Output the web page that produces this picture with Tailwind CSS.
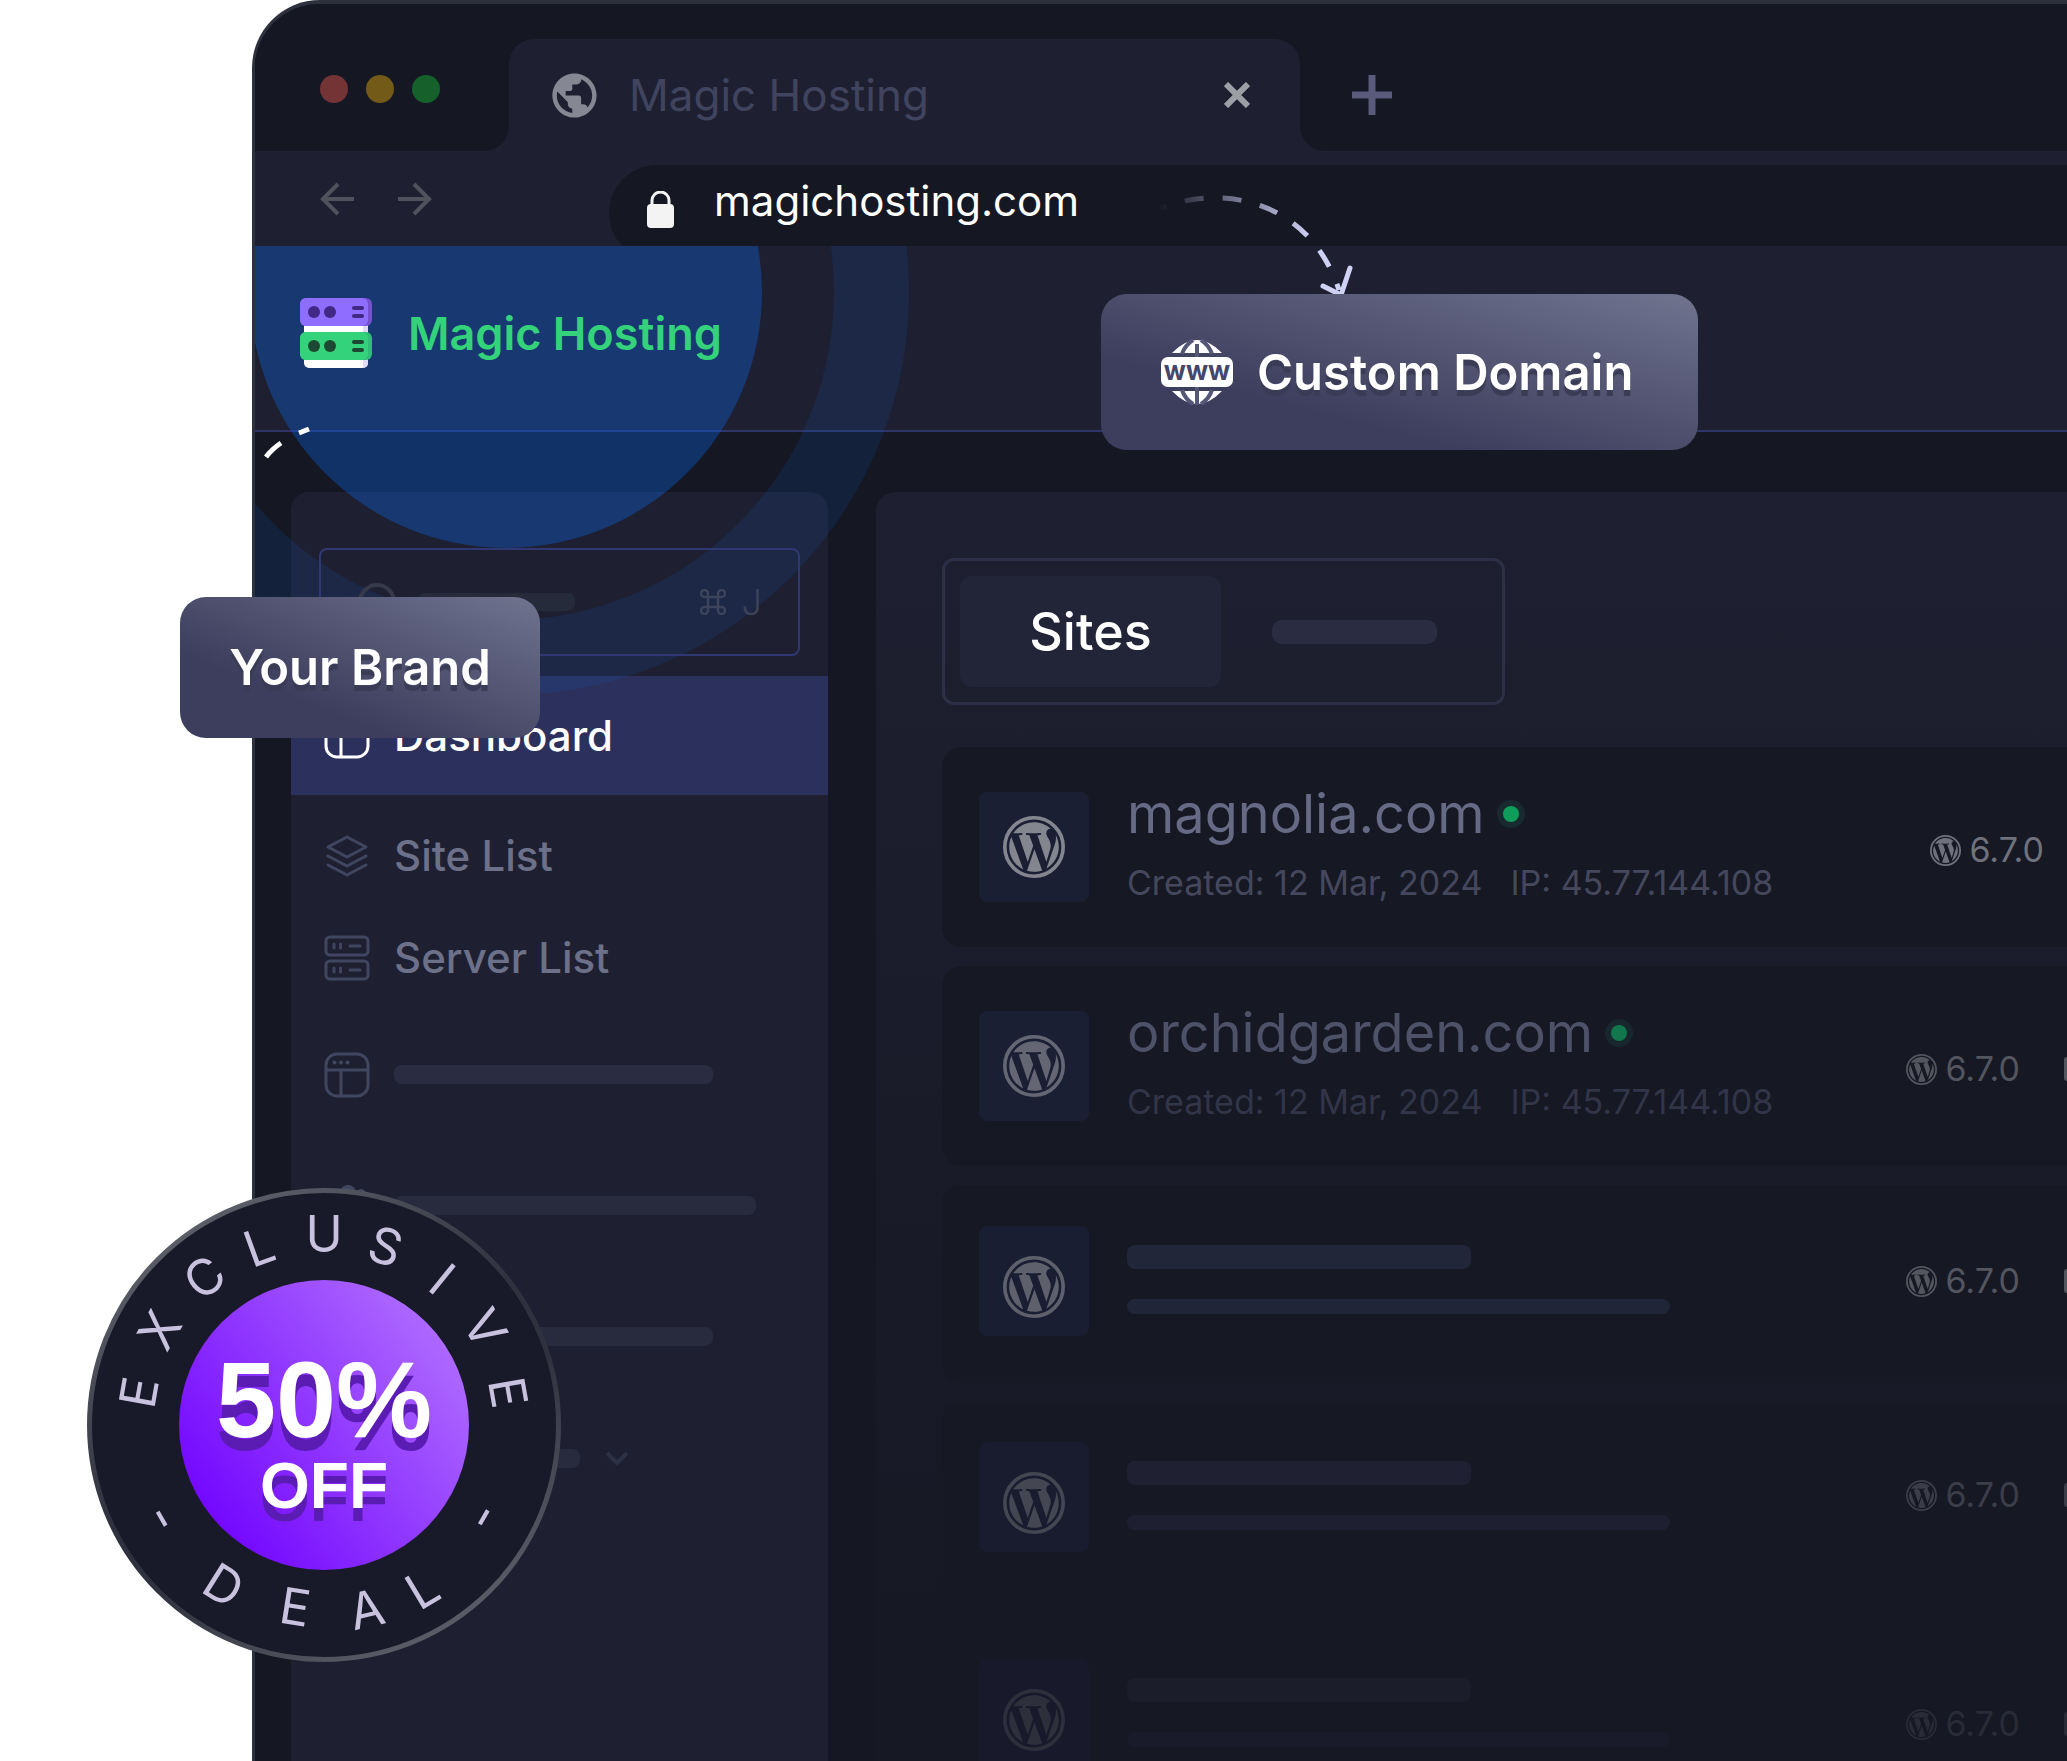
<!DOCTYPE html>
<html lang="en">
<head>
  <meta charset="UTF-8" />
  <meta name="viewport" content="width=device-width, initial-scale=1.0"/>
  <title>Magic Hosting</title>
  <script src="https://cdn.jsdelivr.net/npm/@tailwindcss/browser@4"></script>
</head>
<body class="bg-white font-['Inter',sans-serif]">

  <!-- Shared icons -->
  <svg class="hidden" aria-hidden="true">
    <symbol id="wp" viewBox="0 0 24 24">
      <circle cx="12" cy="12" r="11.3" fill="none" stroke="currentColor" stroke-width="1.4"/>
      <g fill="currentColor" transform="translate(12 12) scale(.89) translate(-12 -12)">
        <path d="M21.469 6.825c.84 1.537 1.318 3.3 1.318 5.175 0 3.979-2.156 7.456-5.363 9.325l3.295-9.527c.615-1.54.82-2.771.82-3.864 0-.405-.026-.78-.07-1.11z"/>
        <path d="M13.488 6.93c.647-.03 1.232-.105 1.232-.105.582-.075.514-.93-.067-.899 0 0-1.755.135-2.88.135-1.064 0-2.85-.15-2.85-.15-.585-.03-.661.855-.075.885 0 0 .54.061 1.125.09l1.68 4.605-2.37 7.08L5.354 6.9c.649-.03 1.234-.1 1.234-.1.585-.075.516-.93-.065-.896 0 0-1.746.138-2.874.138-.2 0-.438-.008-.69-.015C4.911 3.15 8.235 1.215 12 1.215c2.809 0 5.365 1.072 7.286 2.833-.046-.003-.091-.009-.141-.009-1.06 0-1.812.923-1.812 1.914 0 .89.513 1.643 1.06 2.531.411.72.89 1.643.89 2.977 0 .915-.354 1.994-.821 3.479l-1.075 3.585-3.9-11.61z"/>
        <path d="M12 22.784c-1.059 0-2.081-.153-3.048-.437l3.237-9.406 3.315 9.087c.024.053.05.101.078.149-1.12.393-2.325.609-3.582.609z"/>
        <path d="M1.211 12c0-1.564.336-3.05.935-4.39L7.29 21.709C3.694 19.96 1.212 16.271 1.211 12z"/>
      </g>
    </symbol>
    <symbol id="layout" viewBox="0 0 46 46">
      <g fill="none" stroke="currentColor" stroke-width="3">
        <rect x="2" y="2" width="42" height="42" rx="11"/>
        <path d="M2 18h42M17 18v26"/>
      </g>
      <g fill="currentColor"><circle cx="10.500" cy="10.500" r="2"/><circle cx="17" cy="10.500" r="2"/><circle cx="23.500" cy="10.500" r="2"/></g>
    </symbol>
  </svg>

  <div class="relative h-screen overflow-hidden pl-[252px]">

    <!-- Browser window -->
    <div class="isolate flex h-full flex-col overflow-hidden rounded-tl-[68px] border-t-4 border-l-3 border-[#2d303d] bg-[#151723]">

      <!-- Tab strip -->
      <div class="shrink-0 bg-[#151723] pt-[35px]">
        <div class="flex h-28 bg-[#1e2031]">
          <div class="flex w-[254px] gap-[18px] rounded-br-[25px] bg-[#151723] pt-9 pl-[65px]">
            <span class="size-7 rounded-full bg-[#743436]"></span>
            <span class="size-7 rounded-full bg-[#745a18]"></span>
            <span class="size-7 rounded-full bg-[#16602b]"></span>
          </div>
          <div class="w-[791px] bg-[#151723]">
            <div class="flex h-full items-center rounded-t-[25px] bg-[#1e2031] pr-[50px] pl-[39px]">
              <svg class="size-[53px] text-[#858793]" viewBox="0 0 24 24" fill="currentColor"><path d="M12 2C6.480 2 2 6.480 2 12s4.480 10 10 10 10-4.480 10-10S17.520 2 12 2zm-1 17.930c-3.950-.490-7-3.850-7-7.930 0-.620.080-1.210.210-1.790L9 15v1c0 1.100.900 2 2 2v1.930zm6.900-2.540c-.260-.810-1-1.390-1.900-1.390h-1v-3c0-.550-.450-1-1-1H8v-2h2c.550 0 1-.450 1-1V7h2c1.100 0 2-.900 2-2v-.410c2.930 1.190 5 4.060 5 7.410 0 2.080-.800 3.970-2.100 5.390z"/></svg>
              <span class="ml-7 text-[44px] leading-none text-[#40445f]">Magic Hosting</span>
              <button type="button" aria-label="Close tab" class="ml-auto text-[#9c9fa5]">
                <svg class="size-[26px]" viewBox="0 0 26 26" fill="none" stroke="currentColor" stroke-width="6"><path d="M2 2l22 22M24 2L2 24"/></svg>
              </button>
            </div>
          </div>
          <div class="flex flex-1 items-center rounded-bl-[25px] bg-[#151723] pl-[52px]">
            <button type="button" aria-label="New tab" class="text-[#5a5b7c]">
              <svg class="size-10" viewBox="0 0 40 40" fill="none" stroke="currentColor" stroke-width="7"><path d="M20 0v40M0 20h40"/></svg>
            </button>
          </div>
        </div>
      </div>

      <!-- Address row -->
      <div class="flex h-[95px] shrink-0 overflow-hidden bg-[#1e2031] pt-3.5 pl-[65px]">
        <div class="flex items-start gap-11 pt-[17px] text-[#50515c]">
          <button type="button" aria-label="Back"><svg class="size-[34px]" viewBox="0 0 34 34" fill="none" stroke="currentColor" stroke-width="4"><path d="M34 17H3M18 2L3 17l15 15"/></svg></button>
          <button type="button" aria-label="Forward"><svg class="size-[34px]" viewBox="0 0 34 34" fill="none" stroke="currentColor" stroke-width="4"><path d="M0 17h31M16 2l15 15-15 15"/></svg></button>
        </div>
        <div class="ml-[177px] flex h-24 flex-1 items-start rounded-l-full bg-[#151723] pl-[38px]">
          <svg class="mt-[26px] h-[37px] w-[27px] text-[#f3f3f3]" viewBox="0 0 27 37" fill="currentColor"><rect y="13" width="27" height="24" rx="4"/><path d="M5 15V9.500a8.500 8.500 0 0 1 17 0V15" fill="none" stroke="currentColor" stroke-width="3"/></svg>
          <input type="text" aria-label="Address" value="magichosting.com" class="ml-10 h-[70px] flex-1 bg-transparent text-[42px] text-white outline-none" />
        </div>
      </div>

      <!-- Page -->
      <div class="relative flex flex-1 flex-col overflow-hidden">
        <header class="h-[186px] shrink-0 border-b-2 border-[#2e3467] bg-[#1e2031] pt-[52px] pl-[45px]">
          <a href="#" class="relative z-10 flex w-fit items-center gap-9">
            <svg class="h-[70px] w-[72px]" viewBox="0 0 72 70">
              <rect x="4" y="20" width="64" height="50" rx="5" fill="#fff"/>
              <path d="M63 20h5v45a5 5 0 0 1-5 5z" fill="#e3daf8"/>
              <rect width="72" height="28" rx="6" fill="#7451cf"/><rect width="68" height="28" rx="6" fill="#8f6dff"/>
              <rect y="34" width="72" height="28" rx="6" fill="#2fbd78"/><rect width="68" height="28" y="34" rx="6" fill="#34d27a"/>
              <g fill="#432886"><circle cx="14" cy="14" r="6"/><circle cx="30" cy="14" r="6"/><rect x="52" y="8" width="12" height="4" rx="2"/><rect x="52" y="16" width="12" height="4" rx="2"/></g>
              <g fill="#1d4833"><circle cx="14" cy="48" r="6"/><circle cx="30" cy="48" r="6"/><rect x="52" y="42" width="12" height="4" rx="2"/><rect x="52" y="50" width="12" height="4" rx="2"/></g>
            </svg>
            <span class="text-[45px] leading-none font-semibold text-[#34d27a]">Magic Hosting</span>
          </a>
        </header>

        <div class="flex flex-1 gap-12 pt-[60px] pl-9">

          <!-- Sidebar -->
          <aside class="w-[537px] shrink-0 rounded-t-[18px] bg-[#1e2031] pt-14">
            <label class="relative z-10 mx-7 flex h-[108px] items-center rounded-lg border-2 border-[#2f3872] pr-9 pl-[37px] text-[#35394a]">
              <svg class="size-11" viewBox="0 0 44 44" fill="none" stroke="currentColor" stroke-width="4"><circle cx="19" cy="22" r="17"/><path d="M31 35l8 8"/></svg>
              <span class="ml-4 h-[18px] w-[157px] shrink-0 rounded-lg bg-[#262b3c]"></span>
              <input type="search" aria-label="Search" class="w-0 flex-1 bg-transparent outline-none" />
              <svg class="size-[26px] text-[#3c435b]" viewBox="0 0 26 26" fill="none" stroke="currentColor" stroke-width="2.500"><path d="M8 8h10v10H8zM8 8H5a3.500 3.500 0 1 1 3-3.500zM18 8V4.500A3.500 3.500 0 1 1 21.500 8zM18 18h3.500a3.500 3.500 0 1 1-3.500 3.500zM8 18v3.500A3.500 3.500 0 1 1 4.500 18z"/></svg>
              <kbd class="ml-4 font-['Inter',sans-serif] text-4xl font-light text-[#3c435b]">J</kbd>
            </label>

            <nav class="mt-5 text-[42px] leading-[44px] font-medium text-[#6c7089]">
              <a href="#" class="flex h-[119px] items-center gap-6 bg-[#2b315c] pl-[33px] text-white">
                <svg class="size-[46px]"><use href="#layout"/></svg>
                Dashboard
              </a>
              <a href="#" class="mt-2.5 flex h-[102px] items-center gap-6 pl-[33px]">
                <svg class="size-[46px] text-[#414660]" viewBox="0 0 46 46" fill="none" stroke="currentColor" stroke-width="3" stroke-linejoin="round" stroke-linecap="round"><path d="M23 4l19 10-19 10L4 14zM4 23l19 10 19-10M4 32l19 10 19-10"/></svg>
                Site List
              </a>
              <a href="#" class="flex h-[102px] items-center gap-6 pl-[33px]">
                <svg class="size-[46px] text-[#414660]" viewBox="0 0 46 46" fill="none" stroke="currentColor" stroke-width="3" stroke-linecap="round"><rect x="2" y="2" width="42" height="18" rx="4"/><rect x="2" y="26" width="42" height="18" rx="4"/><path d="M10 9v4M16.500 9v4M26 11h10M10 33v4M16.500 33v4M26 35h10"/></svg>
                Server List
              </a>
              <div class="flex h-[131px] items-center gap-6 pl-[33px]">
                <svg class="size-[46px] text-[#414660]"><use href="#layout"/></svg>
                <span class="h-[19px] w-[319px] rounded-lg bg-[#2a2d41]"></span>
              </div>
              <div class="flex h-[131px] items-center gap-6 pl-[33px]">
                <svg class="size-[46px] text-[#414660]" viewBox="0 0 46 46" fill="currentColor" stroke="none"><circle cx="24" cy="10" r="8"/><circle cx="37" cy="11" r="5"/><path d="M8 42c0-24 30-24 30 0z"/></svg>
                <span class="h-[19px] w-[362px] rounded-lg bg-[#282b3e]"></span>
              </div>
              <div class="flex h-[131px] items-center pl-[103px]">
                <span class="h-[19px] w-[319px] rounded-lg bg-[#282b3e]"></span>
              </div>
              <div class="flex h-28 items-center gap-[25px] pl-[103px]">
                <span class="h-[19px] w-[186px] rounded-lg bg-[#282b3e]"></span>
                <svg class="h-4 w-6 text-[#2d3145]" viewBox="0 0 24 16" fill="none" stroke="currentColor" stroke-width="4"><path d="M2 3l10 10L22 3"/></svg>
              </div>
            </nav>
          </aside>

          <!-- Site list panel -->
          <main class="min-w-0 flex-1 rounded-tl-[20px] bg-linear-to-b from-[#1e2031] to-[#161824] to-85% pt-[66px] pl-[66px]">
            <div class="flex h-[147px] w-[563px] items-center rounded-xl border-3 border-[#2c2f45] px-[15px]">
              <button type="button" class="h-[111px] w-[261px] rounded-xl bg-[#222538] text-[52px] leading-none font-medium text-white">Sites</button>
              <span class="ml-[51px] h-6 w-[165px] rounded-[10px] bg-[#2a2d41]"></span>
            </div>

            <div class="mt-[42px] flex flex-col gap-[19px]">
              <section class="flex h-[200px] rounded-l-[20px] bg-[#161824] pt-[45px] pr-[23px] pl-[37px]">
                <div class="flex size-[110px] items-center justify-center rounded-lg bg-[#1b1f34] text-[#83858f]"><svg class="size-[62px]"><use href="#wp"/></svg></div>
                <div class="ml-[38px]">
                  <h2 class="flex items-center gap-[18px] text-[54px] leading-[44px] text-[#666a85]">magnolia.com <span class="size-4 rounded-full bg-[#0f9d5c] ring-6 ring-[#182a2f]"></span></h2>
                  <p class="mt-[26px] flex gap-7 text-[34px] leading-[42px] text-[#45485d]"><span>Created: 12 Mar, 2024</span><span>IP: 45.77.144.108</span></p>
                </div>
                <div class="ml-auto flex h-[116px] items-center gap-2 text-[34px] leading-none text-[#6f717c]"><svg class="size-[31px]"><use href="#wp"/></svg>6.7.0</div>
              </section>

              <section class="flex h-[200px] rounded-l-[20px] bg-[#161824] pt-[45px] pl-[37px]">
                <div class="flex size-[110px] items-center justify-center rounded-lg bg-[#1a1f34] text-[#646773]"><svg class="size-[62px]"><use href="#wp"/></svg></div>
                <div class="ml-[38px]">
                  <h2 class="flex items-center gap-[18px] text-[54px] leading-[44px] text-[#4e5268]">orchidgarden.com <span class="size-4 rounded-full bg-[#12774c] ring-6 ring-[#18272d]"></span></h2>
                  <p class="mt-[26px] flex gap-7 text-[34px] leading-[42px] text-[#323548]"><span>Created: 12 Mar, 2024</span><span>IP: 45.77.144.108</span></p>
                </div>
                <div class="ml-auto flex h-[116px] items-center gap-2 text-[34px] leading-none text-[#53555f]"><svg class="size-[31px]"><use href="#wp"/></svg>6.7.0<span class="ml-9 h-6 w-[3px] rounded-l bg-[#53555f]"></span></div>
              </section>

              <section class="flex h-[198px] rounded-l-[20px] bg-[#161824] pt-[41px] pl-[37px]">
                <div class="flex size-[110px] items-center justify-center rounded-lg bg-[#1a1e33] pt-3 text-[#5e606b]"><svg class="size-[62px]"><use href="#wp"/></svg></div>
                <div class="ml-[38px] pt-[19px]">
                  <div class="h-6 w-[344px] rounded-lg bg-[#212638]"></div>
                  <div class="mt-[30px] h-[15px] w-[543px] rounded-lg bg-[#202538]"></div>
                </div>
                <div class="ml-auto flex h-[110px] items-center gap-2 text-[34px] leading-none text-[#53555f]"><svg class="size-[31px]"><use href="#wp"/></svg>6.7.0<span class="ml-9 h-6 w-[3px] rounded-l bg-[#53555f]"></span></div>
              </section>

              <section class="flex h-[198px] rounded-l-[20px] bg-[#161824] pt-10 pl-[37px]">
                <div class="flex size-[110px] items-center justify-center rounded-lg bg-[#191c2f] pt-3 text-[#444652]"><svg class="size-[62px]"><use href="#wp"/></svg></div>
                <div class="ml-[38px] pt-[19px]">
                  <div class="h-6 w-[344px] rounded-lg bg-[#1f2132]"></div>
                  <div class="mt-[30px] h-[15px] w-[543px] rounded-lg bg-[#1e2032]"></div>
                </div>
                <div class="ml-auto flex h-[106px] items-center gap-2 text-[34px] leading-none text-[#3b3d48]"><svg class="size-[31px]"><use href="#wp"/></svg>6.7.0<span class="ml-9 h-6 w-[3px] rounded-l bg-[#3b3d48]"></span></div>
              </section>

              <section class="flex h-[198px] rounded-l-[20px] bg-[#161824] pt-10 pl-[37px]">
                <div class="flex size-[110px] items-center justify-center rounded-lg bg-[#181a2b] pt-3 text-[#2d2f3b]"><svg class="size-[62px]"><use href="#wp"/></svg></div>
                <div class="ml-[38px] pt-[19px]">
                  <div class="h-6 w-[344px] rounded-lg bg-[#1b1d2b]"></div>
                  <div class="mt-[30px] h-[15px] w-[543px] rounded-lg bg-[#191b2b]"></div>
                </div>
                <div class="ml-auto flex h-[130px] items-center gap-2 text-[34px] leading-none text-[#292b36]"><svg class="size-[31px]"><use href="#wp"/></svg>6.7.0<span class="ml-9 h-6 w-[3px] rounded-l bg-[#292b36]"></span></div>
              </section>
            </div>
          </main>
        </div>

        <!-- Spotlight rings round the logo -->
        <div class="pointer-events-none absolute -top-[210px] -left-[5px] size-[512px] rounded-full bg-[#0d66ea]/34"></div>
        <div class="pointer-events-none absolute -top-[357px] -left-[152px] size-[806px] rounded-full border-[75px] border-[#1068d8]/13"></div>
      </div>
    </div>

    <!-- Dashed arrows -->
    <svg class="absolute top-[192px] left-[1150px] h-[115px] w-[210px]" viewBox="0 0 210 115" fill="none" stroke-width="5">
      <defs><linearGradient id="fade" x1="0" y1="0" x2="1" y2="0"><stop offset="0" stop-color="#cfd2f5" stop-opacity="0"/><stop offset=".85" stop-color="#cfd2f5"/></linearGradient></defs>
      <path d="M8 17C75-10 160 10 189 98" stroke="url(#fade)" stroke-dasharray="19 19" stroke-dashoffset="10"/>
      <path d="M173 94l18 9 9-27" stroke="#cfd2f5" stroke-linecap="round" stroke-linejoin="round"/>
    </svg>
    <svg class="absolute top-[425px] left-[252px] h-[60px] w-[60px]" viewBox="0 0 60 60" fill="none" stroke="#fff" stroke-width="5"><path d="M57 4l-10 4M29 18Q20 24 14 32"/></svg>

    <!-- Callouts -->
    <div class="absolute top-[294px] left-[1101px] flex h-[156px] w-[597px] items-center gap-6 rounded-[26px] bg-linear-to-tr from-[#3d3e5d] from-30% to-[#70748f] pl-[60px]">
      <svg class="h-[66px] w-[72px]" viewBox="0 0 72 66">
        <path d="M11 14Q36-12 61 14zM11 52Q36 78 61 52z" fill="#fff"/>
        <g fill="none" stroke="#555776" stroke-width="4"><path d="M36 5v61M32 1Q24 6 21 15M40 1Q48 6 51 15M32 65q-8-5-11-14M40 65q8-5 11-14"/></g>
        <rect y="18" width="72" height="30" rx="7" fill="#fff"/>
        <text x="36" y="41" text-anchor="middle" font-family="Inter, sans-serif" font-size="26" font-weight="700" fill="#45466a">www</text>
      </svg>
      <span class="text-[49px] leading-none font-semibold whitespace-nowrap text-white [text-shadow:0_6px_1px_#3a3c56]">Custom Domain</span>
    </div>

    <div class="absolute top-[597px] left-[180px] flex h-[141px] w-[360px] items-center justify-center rounded-[26px] bg-linear-to-tr from-[#3d3e5d] from-30% to-[#70748f]">
      <span class="text-[49px] leading-none font-semibold whitespace-nowrap text-white [text-shadow:0_6px_1px_#3a3c56]">Your Brand</span>
    </div>

    <!-- Deal badge -->
    <div class="absolute top-[1188px] left-[87px] size-[474px]">
      <svg class="absolute inset-0 size-full" viewBox="-237 -237 474 474">
        <defs>
          <linearGradient id="rim" x1=".2" y1="0" x2=".8" y2="1"><stop offset="0" stop-color="#62646e"/><stop offset=".45" stop-color="#2f313e"/><stop offset=".6" stop-color="#2f313e"/><stop offset="1" stop-color="#62646e"/></linearGradient>
          <linearGradient id="violet" x1=".1" y1=".8" x2=".9" y2=".2"><stop offset="0" stop-color="#7408ff"/><stop offset="1" stop-color="#ad68ff"/></linearGradient>
        </defs>
        <circle r="234.500" fill="#181a29" stroke="url(#rim)" stroke-width="5"/>
        <circle r="145" fill="url(#violet)"/>
        <g font-family="Inter, sans-serif" font-size="50" fill="#c9c2df" text-anchor="middle">
          <text transform="rotate(-80)" y="-170">E</text>
          <text transform="rotate(-60)" y="-172">X</text>
          <text transform="rotate(-39)" y="-172">C</text>
          <text transform="rotate(-20)" y="-172">L</text>
          <text y="-173">U</text>
          <text transform="rotate(19)" y="-171">S</text>
          <text transform="rotate(39)" y="-170">I</text>
          <text transform="rotate(59)" y="-170">V</text>
          <text transform="rotate(80)" y="-169">E</text>
          <text transform="rotate(60)" y="203">-</text>
          <text transform="rotate(32)" y="207">D</text>
          <text transform="rotate(9)" y="202">E</text>
          <text transform="rotate(-13)" y="207">A</text>
          <text transform="rotate(-31)" y="209">L</text>
          <text transform="rotate(-60)" y="200">-</text>
        </g>
      </svg>
      <p class="relative pt-[158px] text-center font-['Liberation_Sans',sans-serif] font-bold text-white">
        <span class="block text-[108px] leading-[108px] [text-shadow:0_13px_0_#5a1cb3]">50%</span>
        <span class="block text-[64px] leading-[64px] [text-shadow:0_13px_0_#5a1cb3]">OFF</span>
      </p>
    </div>
  </div>
</body>
</html>
